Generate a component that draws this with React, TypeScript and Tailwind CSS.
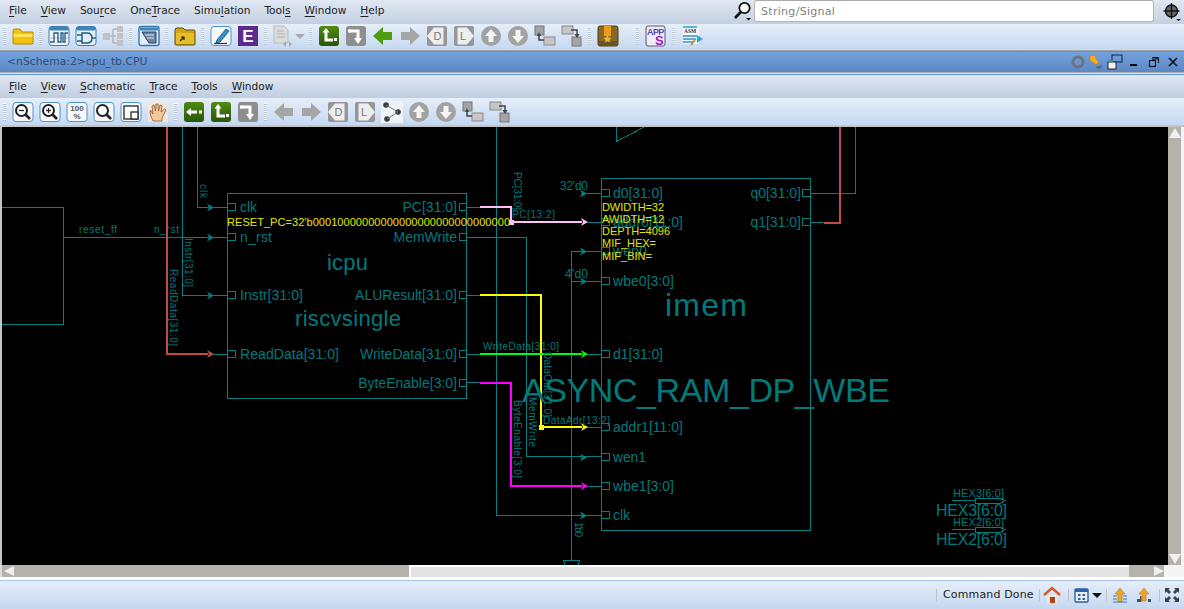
import type { ReactNode } from "react";

const TEAL = "#008080";
const LABEL = "#007a7a";
const RED = "#c44a48";

function Grip() {
  return (
    <div className="w-[9px] h-full flex items-center justify-center shrink-0">
      <div className="w-[3px] h-[18px] bg-[repeating-linear-gradient(to_bottom,#ffffff_0px,#ffffff_1px,#b4c0cf_1px,#b4c0cf_2px)]" />
    </div>
  );
}

function Slot({ children, w = "w-[27px]" }: { children?: ReactNode; w?: string }) {
  return <div className={`${w} h-full flex items-center justify-center shrink-0`}>{children}</div>;
}

function Ico({ children, s = 22 }: { children: ReactNode; s?: number }) {
  return (
    <svg width={s} height={s} viewBox="0 0 22 22">
      {children}
    </svg>
  );
}

const Folder = () => (
  <Ico>
    <path d="M1 6 L1 18 Q1 19 2 19 L20 19 Q21 19 21 18 L21 7 L10 7 L8 4 L3 4 Q1 4 1 6Z" fill="#f2c20c" stroke="#b48a00" />
    <rect x="1.5" y="9" width="19" height="3" fill="#ffe35c" />
  </Ico>
);

const Frame = ({ children }: { children: ReactNode }) => (
  <>
    <rect x="1" y="1.5" width="20" height="19" rx="3" fill="#f5f8fb" stroke="#4d93c9" />
    {children}
  </>
);

const Wave = () => (
  <Ico>
    <rect x="1" y="1.5" width="20" height="19" rx="3" fill="#eef3f7" stroke="#3c7fae" />
    <rect x="1" y="1.5" width="20" height="4" rx="2" fill="#3e84b6" />
    <path d="M2 13 H20" stroke="#d98a8a" strokeWidth="0.6" />
    <path d="M2 17 H6 V8 H10 V17 H13 V8 H15 V17 H17 V8 H20" fill="none" stroke="#1f5d86" strokeWidth="1.3" />
  </Ico>
);

const Gate = () => (
  <Ico>
    <rect x="1" y="1.5" width="20" height="19" rx="3" fill="#e6eef5" stroke="#3c7fae" />
    <rect x="1" y="1.5" width="20" height="4" rx="2" fill="#3e84b6" />
    <path d="M7 8 H12 Q17 8 17 13 Q17 18 12 18 H7 Z M2 10 H7 M2 16 H7 M17 13 H21" fill="none" stroke="#1f5d86" strokeWidth="1.5" />
  </Ico>
);

const Hier = () => (
  <Ico>
    <path d="M7 11 H14 M11 4 V18 M11 4 H15 M11 18 H15" stroke="#b6b6b6" strokeWidth="1.5" fill="none" />
    <rect x="1" y="8" width="7" height="7" fill="#c2c2c2" />
    <rect x="15" y="1" width="6" height="6" fill="#c2c2c2" />
    <rect x="15" y="8" width="6" height="6" fill="#c2c2c2" />
    <rect x="15" y="15" width="6" height="6" fill="#c2c2c2" />
  </Ico>
);

const ListWin = () => (
  <Ico>
    <rect x="1" y="1.5" width="20" height="19" rx="2" fill="#e3edf6" stroke="#2f79b3" strokeWidth="1.4" />
    <rect x="2" y="2.5" width="18" height="3" fill="#3e84b6" />
    <path d="M4 7 H18 V18 H11 Z" fill="#6d83a6" stroke="#2d3f66" />
    <path d="M7 10 H16 M9 13 H16" stroke="#dfe7f0" />
  </Ico>
);

const DarkFolder = () => (
  <Ico>
    <path d="M1 5 Q1 3 3 3 L9 3 L11 5 L20 5 Q21 5 21 6 L21 19 Q21 20 20 20 L2 20 Q1 20 1 19Z" fill="#d6a613" stroke="#5d4a0c" />
    <rect x="2" y="8" width="18" height="11" fill="#e6bd25" />
    <path d="M6 16 L10 12 M7 12 H10 V15" stroke="#222" strokeWidth="1.2" fill="none" />
  </Ico>
);

const Pencil = () => (
  <Ico>
    <Frame>
      <path d="M7 15 L16 4 L19 6 L10 17 L6 18 Z" fill="#3c8ec8" stroke="#1e5d8c" />
      <path d="M4 18.5 H17" stroke="#333" strokeWidth="1.2" />
    </Frame>
  </Ico>
);

const EIcon = () => (
  <Ico>
    <rect x="1" y="1" width="20" height="20" fill="#5b2a8c" />
    <text x="11" y="17" textAnchor="middle" fontFamily="Liberation Sans" fontWeight="bold" fontSize="17" fill="#fff">
      E
    </text>
  </Ico>
);

const DocGray = () => (
  <Ico>
    <path d="M3 1 H13 L17 5 V18 H3 Z" fill="#dbdcdd" stroke="#bcbcbc" />
    <path d="M6 6 H13 M6 9 H14 M6 12 H14" stroke="#b0b0b0" />
    <path d="M12 19 L15 16 L15 22 Z M21 19 L18 16 L18 22 Z" fill="#a9a9a9" />
  </Ico>
);

const GreenT = () => (
  <Ico>
    <defs>
      <linearGradient id="gt" x1="0" y1="0" x2="0" y2="1">
        <stop offset="0" stopColor="#4f8c12" />
        <stop offset="1" stopColor="#275605" />
      </linearGradient>
    </defs>
    <rect x="1" y="1" width="20" height="20" rx="3" fill="url(#gt)" />
    <path d="M8 5 V15 H15" fill="none" stroke="#fff" strokeWidth="3" />
    <path d="M8 3 L4.5 7.5 H11.5 Z" fill="#fff" />
    <rect x="16" y="13" width="3" height="3" fill="#fff" />
  </Ico>
);

const GreenBack = () => (
  <Ico>
    <defs>
      <linearGradient id="gt2" x1="0" y1="0" x2="0" y2="1">
        <stop offset="0" stopColor="#4f8c12" />
        <stop offset="1" stopColor="#275605" />
      </linearGradient>
    </defs>
    <rect x="1" y="1" width="20" height="20" rx="3" fill="url(#gt2)" />
    <path d="M7 11 H14" stroke="#fff" strokeWidth="3" />
    <path d="M3 11 L8 7 V15 Z" fill="#fff" />
    <rect x="16" y="9.5" width="3" height="3" fill="#fff" />
  </Ico>
);

const GrayTurn = () => (
  <Ico>
    <rect x="1" y="1" width="20" height="20" rx="3" fill="#8e8e8e" />
    <path d="M4 6 H13 V15" fill="none" stroke="#fff" strokeWidth="3" />
    <rect x="3" y="4.5" width="3" height="3" fill="#fff" />
    <path d="M13 19 L9 13 H17 Z" fill="#fff" />
  </Ico>
);

const ArrowLeft = ({ c = "#a5a5a5" }: { c?: string }) => (
  <Ico>
    <path d="M1 11 L11 2 V7 H20 V15 H11 V20 Z" fill={c} />
  </Ico>
);

const ArrowRight = () => (
  <Ico>
    <path d="M21 11 L11 2 V7 H2 V15 H11 V20 Z" fill="#a5a5a5" />
  </Ico>
);

const DTag = () => (
  <Ico>
    <path d="M1 3 Q1 1 3 1 H19 Q21 1 21 3 V19 Q21 21 19 21 H3 Q1 21 1 19 Z" fill="#969696" />
    <path d="M1 11 L8 2.5 H17.5 V19.5 H8 Z" fill="#eeeeee" />
    <text x="11.5" y="15" textAnchor="middle" fontFamily="Liberation Sans" fontSize="11" fill="#777">
      D
    </text>
  </Ico>
);

const LTag = () => (
  <Ico>
    <path d="M1 3 Q1 1 3 1 H19 Q21 1 21 3 V19 Q21 21 19 21 H3 Q1 21 1 19 Z" fill="#969696" />
    <path d="M21 11 L14 2.5 H4.5 V19.5 H14 Z" fill="#eeeeee" />
    <text x="10" y="15" textAnchor="middle" fontFamily="Liberation Sans" fontSize="11" fill="#777">
      L
    </text>
  </Ico>
);

const Round = ({ down }: { down?: boolean }) => (
  <Ico>
    <circle cx="11" cy="11" r="10" fill="#a2a2a2" />
    <path d={down ? "M11 18 L5 11 H8.5 V5 H13.5 V11 H17 Z" : "M11 4 L5 11 H8.5 V17 H13.5 V11 H17 Z"} fill="#f4f4f4" />
  </Ico>
);

const StepA = () => (
  <Ico>
    <rect x="1" y="1" width="9" height="9" fill="#a4a4a4" stroke="#777" />
    <rect x="10" y="12" width="11" height="8" fill="#c6c6c6" stroke="#8a8a8a" />
    <path d="M5 10 V15 H10" stroke="#444" strokeWidth="1.5" fill="none" />
    <path d="M5 7 L3 11 H7Z" fill="#444" />
  </Ico>
);

const StepB = () => (
  <Ico>
    <rect x="1" y="1" width="11" height="8" fill="#c6c6c6" stroke="#8a8a8a" />
    <rect x="11" y="12" width="9" height="9" fill="#a4a4a4" stroke="#777" />
    <path d="M10 5 H16 V10" stroke="#444" strokeWidth="1.5" fill="none" />
    <path d="M16 13 L13.5 9 H18.5Z" fill="#444" />
  </Ico>
);

const Book = () => (
  <Ico>
    <rect x="1" y="1" width="20" height="20" rx="2" fill="#86692a" stroke="#4f3d14" />
    <rect x="2" y="16" width="18" height="4" fill="#6b5320" />
    <rect x="7" y="1" width="7" height="10" fill="#f09a1a" />
    <path d="M10.5 10 L11.7 12.6 L14.5 13 L12.4 14.9 L13 17.6 L10.5 16.2 L8 17.6 L8.6 14.9 L6.5 13 L9.3 12.6 Z" fill="#f4b52c" />
  </Ico>
);

const Apps = () => (
  <Ico>
    <rect x="1" y="1" width="19" height="20" rx="2" fill="#efeaf6" stroke="#5a5a6e" />
    <text x="2" y="10" fontFamily="Liberation Sans" fontWeight="bold" fontSize="9" letterSpacing="-0.6" fill="#5c4fa8">
      APP
    </text>
    <text x="10" y="20" fontFamily="Liberation Sans" fontWeight="bold" fontSize="13" fill="#a514c4">
      S
    </text>
  </Ico>
);

const Asm = () => (
  <Ico>
    <path d="M2 1 H18 V19 H2 Z" fill="#f4f8fb" />
    <rect x="2" y="1" width="14" height="2" fill="#58b6d8" />
    <text x="3" y="8" fontFamily="Liberation Serif" fontWeight="bold" fontSize="5.5" fill="#1e3a5a">
      ASM
    </text>
    <path d="M2 11 H16 M2 14 H15 M2 17 H13" stroke="#3a8fc4" strokeWidth="1.5" />
    <path d="M16 10 L22 14 L16 18 Z" fill="#35a6d6" />
    <path d="M10 20 L14 15" stroke="#b8862c" strokeWidth="1.6" />
  </Ico>
);

const Glass = ({ plus, minus }: { plus?: boolean; minus?: boolean }) => (
  <>
    <circle cx="9.5" cy="9.5" r="5.5" fill="#fff" stroke="#222" strokeWidth="2" />
    <path d="M13.5 13.5 L18 18" stroke="#222" strokeWidth="2.6" />
    {(plus || minus) && <path d="M7 9.5 H12" stroke="#222" strokeWidth="1.3" />}
    {plus && <path d="M9.5 7 V12" stroke="#222" strokeWidth="1.3" />}
  </>
);

const Hand = () => (
  <Ico>
    <rect x="1" y="1" width="20" height="20" fill="#eee8dd" />
    <path d="M6 20 Q3 14 3 11 L3.5 9 L6 13 L5 5 L7 4 L8.5 10 L9 3 L11 3 L11.5 10 L13 4 L15 5 L14 11 L17.5 8 L19 9 L15 17 L15 20 Z" fill="#f5c79c" stroke="#8f5a30" strokeWidth="0.8" />
  </Ico>
);

const Gears = () => (
  <Ico>
    <rect x="0" y="0" width="22" height="22" fill="#f0f2f5" />
    <circle cx="5" cy="4" r="2.8" fill="#3a3a3a" />
    <circle cx="17" cy="11" r="2.8" fill="#3a3a3a" />
    <circle cx="6" cy="18" r="2.8" fill="#3a3a3a" />
    <path d="M5 4 L17 11 L6 18" stroke="#777" fill="none" />
  </Ico>
);

const Crumb = ({ u, rest, pre = "" }: { u: string; rest: string; pre?: string }) => (
  <span className="px-[7px]">
    {pre}
    <span className="underline underline-offset-2">{u}</span>
    {rest}
  </span>
);

const TOOLBAR = "flex items-center bg-[linear-gradient(to_bottom,#e6eef9,#c5d8f1)]";
const PORTS_L: [string, number][] = [
  ["clk", 207],
  ["n_rst", 237],
  ["Instr[31:0]", 295],
  ["ReadData[31:0]", 354],
];
const PORTS_R: [string, number][] = [
  ["PC[31:0]", 207],
  ["MemWrite", 237],
  ["ALUResult[31:0]", 295],
  ["WriteData[31:0]", 354],
  ["ByteEnable[3:0]", 383],
];
const MEM_L: [string, number, number][] = [
  ["d0[31:0]", 193, 50],
  ["addr0[11:0]", 222, 70],
  ["wen0", 251, 34],
  ["wbe0[3:0]", 281, 61],
  ["d1[31:0]", 354, 50],
  ["addr1[11:0]", 427, 70],
  ["wen1", 457, 33],
  ["wbe1[3:0]", 486, 61],
  ["clk", 515, 17],
];
const ARROWS: [number, number, string][] = [
  [214, 207, TEAL],
  [214, 237, TEAL],
  [214, 295, TEAL],
  [587, 193, TEAL],
  [587, 251, TEAL],
  [587, 281, TEAL],
  [587, 457, TEAL],
  [587, 515, TEAL],
];
const ROTATED: [string, number, number, number][] = [
  ["clk", 200, 184, 14],
  ["Instr[31:0]", 185, 238, 49],
  ["ReadData[31:0]", 170, 269, 77],
  ["PC[31:0]", 514, 172, 38],
  ["ByteEnable[3:0]", 514, 400, 78],
  ["MemWrite", 529, 397, 50],
  ["DataOut[31:0]", 544, 352, 65],
  ["1'b0", 575, 522, 15],
];
const WIRE_LABELS: [string, number, number, number][] = [
  ["reset_ff", 79, 233, 38],
  ["n_rst", 154, 233, 25],
  ["PC[13:2]", 512, 218, 43],
  ["WriteData[31:0]", 483, 350, 76],
  ["DataAdr[13:2]", 543, 424, 67],
];
const PARAMS: [string, number, number][] = [
  ["DWIDTH=32", 211, 62],
  ["AWIDTH=12", 223, 62],
  ["DEPTH=4096", 235, 68],
  ["MIF_HEX=", 247, 54],
  ["MIF_BIN=", 260, 50],
];

function Arrow({ x, y, c }: { x: number; y: number; c: string }) {
  return <polygon points={`${x - 7},${y - 4} ${x},${y} ${x - 7},${y + 4} ${x - 5},${y}`} fill={c} />;
}

function Schematic() {
  return (
    <svg width="1166" height="438" viewBox="2 127 1166 438" className="block bg-black" fontFamily="Liberation Sans">
      <g fill="none" stroke={TEAL} strokeWidth="1" shapeRendering="crispEdges">
        <path d="M0 207.5 H63.5 V324.5 H0" />
        <path d="M63.5 237.5 H227" />
        <path d="M197.5 126 V207.5 H227" />
        <path d="M182.5 126 V295.5 H227" />
        <path d="M212 354.5 H227" />
        <rect x="227.5" y="193.5" width="239" height="205" />
        <path d="M467 207.5 H480 M467 295.5 H480 M467 354.5 H480 M467 382.5 H480" />
        <path d="M467 237.5 H526.5 V456.5 H601" />
        <path d="M496.5 126 V515.5 H601" />
        <path d="M571.5 560 V251.5 H601 M571.5 281.5 H601" />
        <path d="M581 193.5 H601 M587 222.5 H601 M587 354.5 H601 M587 427.5 H601 M587 486.5 H601" />
        <rect x="601.5" y="178.5" width="209" height="352" />
        <path d="M811 193.5 H855.5 V126 M811 222.5 H825" />
        <path d="M563.5 560.5 H579.5 L576.5 570 H566.5 Z" />
        <path d="M616.5 126 V141.5 L646 126" />
        <path d="M952 500.5 H975.5 V498.5 H1000 L1005 500.5 L1000 503.5 H975.5 V500.5 M952 529.5 H975.5 V527.5 H1000 L1005 529.5 L1000 532.5 H975.5 V529.5" />
        {PORTS_L.map(([n, y]) => (
          <rect key={n} x="227.5" y={y - 3.5} width="8" height="7" fill="#000" />
        ))}
        {PORTS_R.map(([n, y]) => (
          <rect key={n} x="459.5" y={y - 3.5} width="7" height="7" fill="#000" />
        ))}
        {MEM_L.map(([n, y]) => (
          <rect key={n} x="601.5" y={y - 3.5} width="8" height="7" />
        ))}
        <rect x="802.5" y="189.5" width="8" height="7" fill="#000" />
        <rect x="802.5" y="218.5" width="8" height="7" fill="#000" />
      </g>

      <g fill="none" strokeWidth="2" shapeRendering="crispEdges">
        <path d="M824 222.5 H840 V126" stroke={RED} />
        <path d="M167 126 V354 H208" stroke={RED} />
        <path d="M480 207 H511 V222 H582" stroke="#ffc0f8" />
        <path d="M480 295 H541 V427 H582" stroke="#ffff00" />
        <path d="M480 354 H582" stroke="#00ff00" />
        <path d="M480 382.5 H511 V486 H582" stroke="#ff00ff" />
      </g>
      <rect x="509" y="220" width="5" height="5" fill="#ffc0f8" />
      <rect x="539" y="425" width="5" height="5" fill="#ffff00" />

      {ARROWS.map(([x, y, c]) => (
        <Arrow key={`${x}-${y}`} x={x} y={y + 0.5} c={c} />
      ))}
      <Arrow x={214} y={354} c={RED} />
      <Arrow x={588} y={222} c="#ffc0f8" />
      <Arrow x={588} y={427} c="#ffff00" />
      <Arrow x={588} y={354} c="#00ff00" />
      <Arrow x={588} y={486} c="#ff00ff" />

      <g fill={LABEL}>
        {WIRE_LABELS.map(([t, x, y, w]) => (
          <text key={t + x} x={x} y={y} fontSize="10" textLength={w}>
            {t}
          </text>
        ))}
        {ROTATED.map(([t, x, y, w]) => (
          <text key={t + x} transform={`rotate(90 ${x} ${y})`} x={x} y={y} fontSize="10" textLength={w}>
            {t}
          </text>
        ))}
        <text x="240" y="212" fontSize="14" textLength="17">clk</text>
        <text x="240" y="242" fontSize="14" textLength="32">n_rst</text>
        <text x="240" y="300" fontSize="14" textLength="63">Instr[31:0]</text>
        <text x="240" y="359" fontSize="14" textLength="99">ReadData[31:0]</text>
        <text x="457" y="212" fontSize="14" textAnchor="end">PC[31:0]</text>
        <text x="457" y="242" fontSize="14" textAnchor="end">MemWrite</text>
        <text x="457" y="300" fontSize="14" textAnchor="end">ALUResult[31:0]</text>
        <text x="457" y="359" fontSize="14" textAnchor="end">WriteData[31:0]</text>
        <text x="457" y="388" fontSize="14" textAnchor="end">ByteEnable[3:0]</text>
        <text x="327" y="270" fontSize="22" textLength="41">icpu</text>
        <text x="295" y="326" fontSize="22" textLength="106">riscvsingle</text>
        {MEM_L.map(([t, y, w]) => (
          <text key={t + y} x="613" y={y + 5} fontSize="14" textLength={w}>
            {t}
          </text>
        ))}
        <text x="801" y="198" fontSize="14" textAnchor="end">q0[31:0]</text>
        <text x="801" y="227" fontSize="14" textAnchor="end">q1[31:0]</text>
        <text x="560" y="190" fontSize="12" textLength="28">32'd0</text>
        <text x="565" y="278" fontSize="12" textLength="23">4'd0</text>
        <text x="665" y="316" fontSize="32" textLength="82">imem</text>
        <text x="522" y="402" fontSize="34" textLength="368">ASYNC_RAM_DP_WBE</text>
        <text x="953" y="497" fontSize="11" textLength="51">HEX3[6:0]</text>
        <text x="936" y="516" fontSize="16" textLength="71">HEX3[6:0]</text>
        <text x="953" y="526" fontSize="11" textLength="51">HEX2[6:0]</text>
        <text x="936" y="545" fontSize="16" textLength="71">HEX2[6:0]</text>
      </g>

      <g fill="#e6e600">
        <text x="227" y="226" fontSize="11" textLength="283">RESET_PC=32'b00010000000000000000000000000000</text>
        {PARAMS.map(([t, y, w]) => (
          <text key={t} x="602" y={y} fontSize="11" textLength={w}>
            {t}
          </text>
        ))}
      </g>
    </svg>
  );
}

export default function App() {
  return (
    <div className="w-[1184px] h-[609px] overflow-hidden flex flex-col bg-[#dfe8f4] font-['DejaVu_Sans',sans-serif]">
      {/* main menu and search */}
      <div className="h-[24px] flex items-start bg-[linear-gradient(to_bottom,#e0e8f3,#c3d0e2)]">
        <div className="w-[729px] h-[21px] flex items-center pl-[2px] text-[10.6px] text-[#222]">
          <Crumb u="F" rest="ile" />
          <Crumb u="V" rest="iew" />
          <Crumb pre="Sou" u="r" rest="ce" />
          <Crumb pre="One" u="T" rest="race" />
          <Crumb pre="Simu" u="l" rest="ation" />
          <Crumb pre="Tool" u="s" rest="" />
          <Crumb u="W" rest="indow" />
          <Crumb u="H" rest="elp" />
        </div>
        <div className="w-px h-[12px] mt-[6px] bg-[#d8d8d8]" />
        <div className="w-[24px] h-[22px] flex items-center justify-center">
          <svg width="19" height="20" viewBox="0 0 19 20">
            <circle cx="11.5" cy="7" r="5.2" fill="#fff" stroke="#111" strokeWidth="1.8" />
            <path d="M7.8 11 L2 17" stroke="#111" strokeWidth="2.6" />
            <path d="M13 17 H18 L15.5 19.5Z" fill="#111" />
          </svg>
        </div>
        <div className="w-[400px] h-[22px] bg-white rounded-[3px] border border-[#b5b5b5] border-t-[#aaaaaa] pl-[6px] pt-[2px] flex items-center text-[11px] text-[#808080] tracking-[0.3px]">
          String/Signal
        </div>
        <div className="w-px h-[12px] mt-[6px] ml-[4px] bg-[#d8d8d8]" />
        <div className="flex-1 h-[24px] flex items-center justify-center">
          <svg width="18" height="18" viewBox="0 0 18 18">
            <circle cx="8.5" cy="8" r="6" fill="#666" stroke="#111" strokeWidth="1.4" />
            <path d="M8.5 0 V16 M0.5 8 H16.5" stroke="#111" strokeWidth="1.4" />
            <path d="M13 16 H18 L15.5 18Z" fill="#111" />
          </svg>
        </div>
      </div>

      {/* main toolbar */}
      <div className={`${TOOLBAR} h-[26px] pb-[2px]`}>
        <Grip />
        <Slot><Folder /></Slot>
        <Grip />
        <Slot><Wave /></Slot>
        <Slot><Gate /></Slot>
        <Slot><Hier /></Slot>
        <Grip />
        <Slot><ListWin /></Slot>
        <Grip />
        <Slot><DarkFolder /></Slot>
        <Grip />
        <Slot><Pencil /></Slot>
        <Slot><EIcon /></Slot>
        <Grip />
        <Slot w="w-[36px]">
          <div className="flex items-center gap-[2px]">
            <DocGray />
            <div className="w-0 h-0 border-x-[5px] border-x-transparent border-t-[5px] border-t-[#a9a9a9]" />
          </div>
        </Slot>
        <Grip />
        <Slot><GreenT /></Slot>
        <Slot><GrayTurn /></Slot>
        <Slot><ArrowLeft c="#4e9c10" /></Slot>
        <Slot><ArrowRight /></Slot>
        <Slot><DTag /></Slot>
        <Slot><LTag /></Slot>
        <Slot><Round /></Slot>
        <Slot><Round down /></Slot>
        <Slot><StepA /></Slot>
        <Slot><StepB /></Slot>
        <Grip />
        <Slot><Book /></Slot>
        <div className="w-[12px]" />
        <Grip />
        <Slot><Apps /></Slot>
        <Grip />
        <Slot><Asm /></Slot>
      </div>

      <div className="h-px bg-[#a9a9a9]" />
      {/* document title bar */}
      <div className="h-[21px] border-t border-[#5d8ecb] flex items-center justify-between pl-[7px] text-[10.8px] text-[#2f4c73] bg-[linear-gradient(to_bottom,#72a2df,#5b88c3)]">
        <span>&lt;nSchema:2&gt;cpu_tb.CPU</span>
        <div className="flex items-center h-full">
          <div className="w-[8px] flex justify-center">
            <svg width="14" height="14" viewBox="0 0 14 14" className="shrink-0">
              <circle cx="7" cy="7" r="5" fill="none" stroke="#6c7480" strokeWidth="3" />
            </svg>
          </div>
          <div className="w-[26px] flex justify-center">
            <svg width="17" height="17" viewBox="0 0 17 17">
              <path d="M3 2 L8 1 L9 5 L12 8 L9 11 L6 8 L3 7 Z" fill="#f4ab2e" stroke="#c77a10" strokeWidth="0.6" />
              <path d="M9 13 L16 11 L14 14 L10 15Z" fill="#4a6a90" />
            </svg>
          </div>
          <div className="w-[14px] flex justify-center">
            <svg width="16" height="16" viewBox="0 0 16 16" className="shrink-0">
              <rect x="5" y="1" width="10" height="7" fill="none" stroke="#12233d" />
              <rect x="1" y="8" width="8" height="7" fill="#eef3f8" stroke="#222" />
              <rect x="1" y="6" width="5" height="2" fill="#3e84b6" />
            </svg>
          </div>
          <div className="w-[24px] flex justify-center">
            <svg width="10" height="10" viewBox="0 0 10 10"><rect x="1" y="7" width="7" height="2" fill="#000" /></svg>
          </div>
          <div className="w-[16px] flex justify-center">
            <svg width="10" height="10" viewBox="0 0 10 10">
              <path d="M3.5 0.5 H9.5 V6 M3 3.5 H0.5 V9.5 H6.5 V3.5 H3 M3 2 H9" fill="none" stroke="#000" />
            </svg>
          </div>
          <div className="w-[22px] flex justify-center">
            <svg width="10" height="10" viewBox="0 0 10 10">
              <path d="M1 1 L9 9 M9 1 L1 9" stroke="#000" strokeWidth="1.4" />
            </svg>
          </div>
        </div>
      </div>
      <div className="h-[2px] bg-[#e5e5e5] border-t border-[#a9a9a9]" />
      <div className="h-px bg-[#5d92d4]" />

      {/* schematic menu */}
      <div className="h-[23px] flex items-center pl-[2px] text-[10.6px] text-[#222] bg-[linear-gradient(to_bottom,#e0e8f3,#bfcde0)]">
        <Crumb u="F" rest="ile" />
        <Crumb u="V" rest="iew" />
        <Crumb u="S" rest="chematic" />
        <Crumb u="T" rest="race" />
        <Crumb u="T" rest="ools" />
        <Crumb u="W" rest="indow" />
      </div>

      {/* schematic toolbar */}
      <div className={`${TOOLBAR} h-[27px]`}>
        <Grip />
        <Slot><Ico><Frame><Glass minus /></Frame></Ico></Slot>
        <Slot><Ico><Frame><Glass plus /></Frame></Ico></Slot>
        <Slot>
          <Ico>
            <Frame>
              <text x="11" y="10" textAnchor="middle" fontFamily="Liberation Sans" fontWeight="bold" fontSize="8" fill="#555">100</text>
              <text x="11" y="18" textAnchor="middle" fontFamily="Liberation Sans" fontWeight="bold" fontSize="8" fill="#555">%</text>
            </Frame>
          </Ico>
        </Slot>
        <Slot><Ico><Frame><Glass /></Frame></Ico></Slot>
        <Slot>
          <Ico>
            <Frame>
              <rect x="4" y="5" width="14" height="13" fill="#fff" stroke="#333" strokeWidth="1.4" />
              <rect x="11" y="11" width="7" height="7" fill="#fff" stroke="#333" strokeWidth="1.4" />
            </Frame>
          </Ico>
        </Slot>
        <Slot><Hand /></Slot>
        <Grip />
        <Slot><GreenBack /></Slot>
        <Slot><GreenT /></Slot>
        <Slot><GrayTurn /></Slot>
        <Grip />
        <Slot><ArrowLeft /></Slot>
        <Slot><ArrowRight /></Slot>
        <Slot><DTag /></Slot>
        <Slot><LTag /></Slot>
        <Slot><Gears /></Slot>
        <Slot><Round /></Slot>
        <Slot><Round down /></Slot>
        <Slot><StepA /></Slot>
        <Slot><StepB /></Slot>
      </div>

      {/* canvas with scrollbars */}
      <div className="flex border-t-2 border-[#c4c4c4] bg-white">
        <div className="w-[2px] bg-[#c4c4c4]" />
        <Schematic />
        <div className="w-[13px] bg-[#b5b1ab] flex flex-col justify-between py-[1px] items-center">
          <div className="w-0 h-0 border-x-[6px] border-x-transparent border-b-[10px] border-b-[#f0f0f0]" />
          <div className="w-0 h-0 border-x-[6px] border-x-transparent border-t-[10px] border-t-[#f0f0f0]" />
        </div>
        <div className="flex-1 bg-[#f4f4f4]" />
      </div>
      <div className="h-[12px] flex items-center bg-[#b5b1ab] border-l-2 border-[#dcdcdc]">
        <div className="w-[14px] flex justify-center">
          <div className="w-0 h-0 border-y-[5px] border-y-transparent border-r-[10px] border-r-[#f0f0f0]" />
        </div>
        <div className="w-[393px]" />
        <div className="w-[720px] h-full bg-[#e3e3e3] border-t-2 border-l-2 border-white" />
        <div className="w-[25px]" />
        <div className="w-0 h-0 border-y-[5px] border-y-transparent border-l-[10px] border-l-[#f0f0f0]" />
        <div className="flex-1 h-full bg-[#f4f4f4]" />
      </div>
      <div className="h-[3px] bg-white" />
      <div className="h-px bg-[#a9c4e6]" />

      {/* status bar */}
      <div className="flex-1 flex items-center justify-end bg-[linear-gradient(to_bottom,#e6eef9,#c5d8f1)] text-[11px] text-[#222]">
        <div className="w-px h-[12px] bg-[#c2c2c2] mr-[6px]" />
        <span className="w-[96px] tracking-[0.15px]">Command Done</span>
        <div className="w-px h-[12px] bg-[#c2c2c2]" />
        <div className="w-[28px] pr-[4px] flex justify-center">
          <svg width="18" height="18" viewBox="0 0 18 18">
            <path d="M1 9 L9 2 L17 9" fill="none" stroke="#d9562b" strokeWidth="2.4" />
            <rect x="4" y="9" width="10" height="8" fill="#f2ead8" />
            <rect x="7" y="11" width="5" height="6" fill="#a8431c" />
          </svg>
        </div>
        <div className="w-px h-[12px] bg-[#c2c2c2]" />
        <div className="w-[37px] flex items-center justify-center gap-[3px]">
          <svg width="15" height="15" viewBox="0 0 15 15">
            <rect x="1" y="1" width="13" height="13" rx="1" fill="#e8eff7" stroke="#2b62a8" strokeWidth="1.4" />
            <rect x="1" y="1" width="13" height="3" fill="#2b62a8" />
            <path d="M4 6 H6.5 V8 H4 Z M8.5 6 H11 V8 H8.5 Z M4 10 H6.5 V12 H4 Z M8.5 10 H11 V12 H8.5 Z" fill="#2b62a8" />
          </svg>
          <div className="w-0 h-0 border-x-[5px] border-x-transparent border-t-[5px] border-t-[#111]" />
        </div>
        <div className="w-px h-[12px] bg-[#c2c2c2]" />
        <div className="w-[26px] flex justify-center">
          <svg width="16" height="16" viewBox="0 0 16 16">
            <path d="M8 1 L3 7 H6 V15 H10 V7 H13 Z" fill="#f2a51f" stroke="#a86b10" strokeWidth="0.5" />
            <path d="M1 9 H5 M11 9 H15 M1 12 H5 M11 12 H15 M1 15 H15" stroke="#3b79b0" strokeWidth="1.2" />
          </svg>
        </div>
        <div className="w-[22px] flex justify-center">
          <svg width="16" height="16" viewBox="0 0 16 16">
            <path d="M8 1 L3 7 H6 V14 H10 V7 H13 Z" fill="#f2a51f" stroke="#a86b10" strokeWidth="0.5" />
            <path d="M1 12 H4 V15 H1 Z M12 12 H15 V15 H12 Z M4 9 H5.5 V15 H4 Z" fill="#45505c" />
          </svg>
        </div>
        <div className="w-px h-[12px] ml-[4px] bg-[#c2c2c2]" />
        <div className="w-[24px] flex justify-center">
          <svg width="16" height="16" viewBox="0 0 16 16">
            <path d="M1 1 H6 L4.5 2.5 L7 5 L5 7 L2.5 4.5 L1 6 Z M15 1 V6 L13.5 4.5 L11 7 L9 5 L11.5 2.5 L10 1 Z M1 15 V10 L2.5 11.5 L5 9 L7 11 L4.5 13.5 L6 15 Z M15 15 H10 L11.5 13.5 L9 11 L11 9 L13.5 11.5 L15 10 Z" fill="#3a4048" />
          </svg>
        </div>
      </div>
    </div>
  );
}
